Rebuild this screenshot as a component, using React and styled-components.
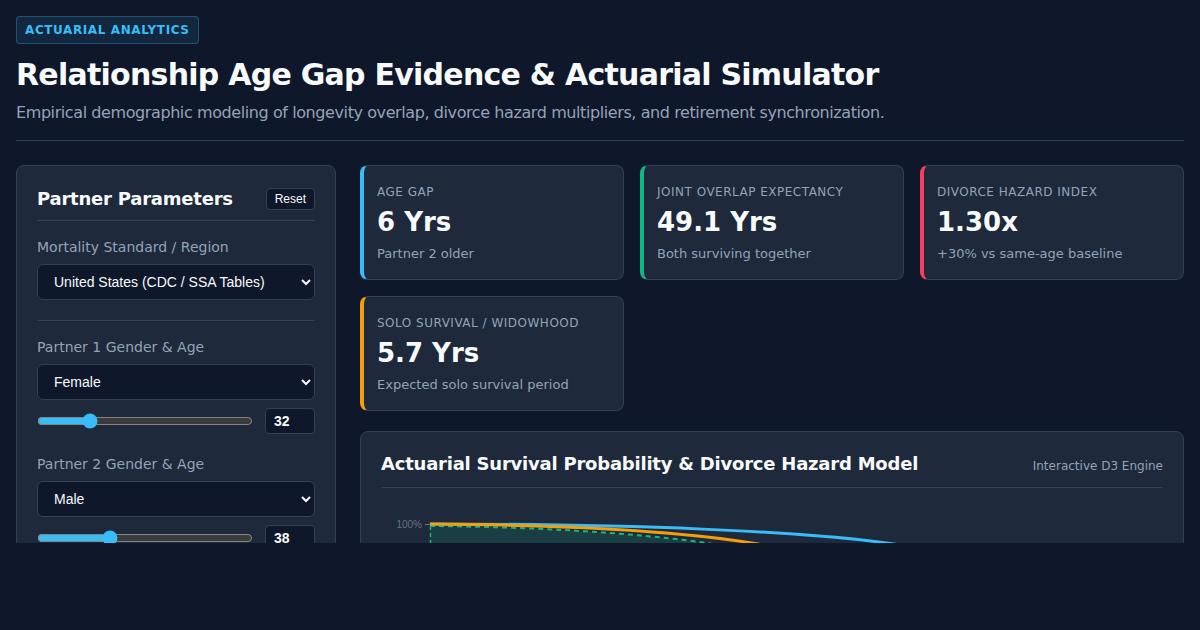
import React from "react";
import styled, { createGlobalStyle } from "styled-components";

const Global = createGlobalStyle`
  html, body { margin: 0; padding: 0; background: #0f172a; }
  body { font-family: "DejaVu Sans", sans-serif; color: #f8fafc; color-scheme: dark; }
  * { box-sizing: border-box; }
`;

const Page = styled.div`
  height: 543px;
  overflow: hidden;
  padding: 16px;
`;

const Header = styled.header`
  padding-bottom: 16px;
  border-bottom: 1px solid #334155;
`;

const Badge = styled.span`
  display: inline-block;
  padding: 6px 8px;
  line-height: 14px;
  font-size: 12px;
  font-weight: 700;
  letter-spacing: 0.6px;
  color: #38bdf8;
  background: rgba(56, 189, 248, 0.1);
  border: 1px solid rgba(56, 189, 248, 0.3);
  border-radius: 4px;
`;

const Title = styled.h1`
  margin: 13px 0 7px;
  font-size: 30px;
  line-height: 36px;
  font-weight: 700;
  letter-spacing: -0.75px;
  color: #f8fafc;
`;

const Subtitle = styled.p`
  margin: 0;
  padding-top: 1px;
  font-size: 16px;
  line-height: 23px;
  letter-spacing: -0.41px;
  color: #94a3b8;
`;

const Main = styled.main`
  display: grid;
  grid-template-columns: 320px 1fr;
  gap: 24px;
  margin-top: 24px;
  align-items: start;
`;

const Panel = styled.section`
  background: #1e293b;
  border: 1px solid #334155;
  border-radius: 8px;
  padding: 20px;
`;

const PanelHead = styled.div`
  display: flex;
  justify-content: space-between;
  align-items: ${(p) => p.$align || "center"};
  padding-top: ${(p) => p.$pt || 0}px;
  padding-bottom: ${(p) => p.$pb || 10}px;
  border-bottom: 1px solid #334155;
`;

const PanelTitle = styled.h2`
  margin: 0;
  font-size: 18px;
  line-height: 24px;
  font-weight: 700;
  letter-spacing: -0.22px;
  color: #f8fafc;
`;

const ResetButton = styled.button`
  font-family: "Liberation Sans", Arial, sans-serif;
  font-size: 12px;
  line-height: 14px;
  padding: 3px 8px;
  height: 22px;
  color: #f8fafc;
  background: #0f172a;
  border: 1px solid #334155;
  border-radius: 4px;
`;

const Field = styled.div`
  display: flex;
  flex-direction: column;
  margin-top: ${(p) => p.$mt || 0}px;
`;

const Label = styled.label`
  font-size: 14px;
  line-height: 20px;
  color: #94a3b8;
  margin-bottom: 7px;
`;

const Select = styled.select`
  height: 36px;
  width: 100%;
  padding: 0 8px 0 12px;
  font-family: "Liberation Sans", Arial, sans-serif;
  font-size: 14px;
  color: #f8fafc;
  background: #0f172a;
  border: 1px solid #334155;
  border-radius: 6px;
`;

const Divider = styled.hr`
  border: 0;
  border-top: 1px solid #334155;
  margin: 20px 0 16px;
`;

const SliderRow = styled.div`
  display: flex;
  align-items: center;
  gap: 12px;
  margin-top: 8px;
`;

const Range = styled.input`
  flex: 1;
  margin: 0;
  accent-color: #38bdf8;
`;

const NumberBox = styled.input`
  width: 50px;
  height: 26px;
  padding: 0 8px;
  font-family: "Liberation Sans", Arial, sans-serif;
  font-weight: 700;
  font-size: 14px;
  color: #f8fafc;
  background: #0f172a;
  border: 1px solid #334155;
  border-radius: 4px;
  -moz-appearance: textfield;
  &::-webkit-inner-spin-button,
  &::-webkit-outer-spin-button { -webkit-appearance: none; margin: 0; }
`;

const RightCol = styled.div`
  display: flex;
  flex-direction: column;
  gap: 20px;
`;

const Cards = styled.div`
  display: grid;
  grid-template-columns: repeat(3, 1fr);
  gap: 16px;
`;

const Card = styled.div`
  background: #1e293b;
  border: 1px solid #334155;
  border-left: 4px solid ${(p) => p.$accent};
  border-radius: 8px;
  padding: 17px 12px 15px 13px;
`;

const CardLabel = styled.div`
  font-size: 12px;
  line-height: 18px;
  letter-spacing: 0.5px;
  text-transform: uppercase;
  color: #94a3b8;
`;

const CardValue = styled.div`
  margin-top: 6px;
  font-size: 26px;
  line-height: 31px;
  font-weight: 700;
  color: #f8fafc;
`;

const CardSub = styled.div`
  margin-top: 6px;
  font-size: 13px;
  line-height: 20px;
  color: #94a3b8;
`;

const EngineTag = styled.span`
  font-size: 12px;
  color: #94a3b8;
`;

const ChartWrap = styled.div`
  margin-top: 13px;
`;

const cards = [
  { label: "Age Gap", value: "6 Yrs", sub: "Partner 2 older", accent: "#38bdf8" },
  { label: "Joint Overlap Expectancy", value: "49.1 Yrs", sub: "Both surviving together", accent: "#10b981" },
  { label: "Divorce Hazard Index", value: "1.30x", sub: "+30% vs same-age baseline", accent: "#f43f5e" },
  { label: "Solo Survival / Widowhood", value: "5.7 Yrs", sub: "Expected solo survival period", accent: "#f59e0b" },
];

function Chart() {
  const dashed = "M49,25 C150,26 250,31 333,43 C420,58 520,150 600,273";
  return (
    <svg width="782" height="300" viewBox="0 0 782 300">
      <text x="41" y="27" fontSize="10" fill="#64748b" textAnchor="end" fontFamily="Liberation Sans, Arial, sans-serif">100%</text>
      <line x1="44" y1="23.5" x2="49" y2="23.5" stroke="#64748b" strokeWidth="1" />
      <path d={`${dashed} L600,273 L49,273 Z`} fill="rgba(16,185,129,0.15)" />
      <line x1="49.5" y1="25" x2="49.5" y2="273" stroke="#10b981" strokeWidth="1.5" strokeDasharray="4 3" />
      <path d={dashed} fill="none" stroke="#10b981" strokeWidth="2" strokeDasharray="5 4" />
      <path d="M49,23 C250,23 420,30 513,43 C600,56 700,150 770,260" fill="none" stroke="#38bdf8" strokeWidth="3" />
      <path d="M49,23 C180,24 300,30 377,43 C460,58 560,160 640,270" fill="none" stroke="#f59e0b" strokeWidth="3" />
    </svg>
  );
}

export default function App() {
  return (
    <>
      <Global />
      <Page>
        <Header>
          <Badge>ACTUARIAL ANALYTICS</Badge>
          <Title>Relationship Age Gap Evidence &amp; Actuarial Simulator</Title>
          <Subtitle>
            Empirical demographic modeling of longevity overlap, divorce hazard multipliers, and retirement synchronization.
          </Subtitle>
        </Header>
        <Main>
          <Panel>
            <PanelHead $pt={1} $pb={9}>
              <PanelTitle>Partner Parameters</PanelTitle>
              <ResetButton>Reset</ResetButton>
            </PanelHead>
            <Field $mt={16}>
              <Label>Mortality Standard / Region</Label>
              <Select defaultValue="us">
                <option value="us">United States (CDC / SSA Tables)</option>
              </Select>
            </Field>
            <Divider />
            <Field>
              <Label>Partner 1 Gender &amp; Age</Label>
              <Select defaultValue="f">
                <option value="f">Female</option>
                <option value="m">Male</option>
              </Select>
              <SliderRow>
                <Range type="range" min="18" max="80" defaultValue="32" />
                <NumberBox type="number" defaultValue="32" />
              </SliderRow>
            </Field>
            <Field $mt={20}>
              <Label>Partner 2 Gender &amp; Age</Label>
              <Select defaultValue="m">
                <option value="f">Female</option>
                <option value="m">Male</option>
              </Select>
              <SliderRow>
                <Range type="range" min="18" max="80" defaultValue="38" />
                <NumberBox type="number" defaultValue="38" />
              </SliderRow>
            </Field>
          </Panel>
          <RightCol>
            <Cards>
              {cards.map((c) => (
                <Card key={c.label} $accent={c.accent}>
                  <CardLabel>{c.label}</CardLabel>
                  <CardValue>{c.value}</CardValue>
                  <CardSub>{c.sub}</CardSub>
                </Card>
              ))}
            </Cards>
            <Panel>
              <PanelHead $pt={0} $pb={11} $align="baseline">
                <PanelTitle>Actuarial Survival Probability &amp; Divorce Hazard Model</PanelTitle>
                <EngineTag>Interactive D3 Engine</EngineTag>
              </PanelHead>
              <ChartWrap>
                <Chart />
              </ChartWrap>
            </Panel>
          </RightCol>
        </Main>
      </Page>
    </>
  );
}
